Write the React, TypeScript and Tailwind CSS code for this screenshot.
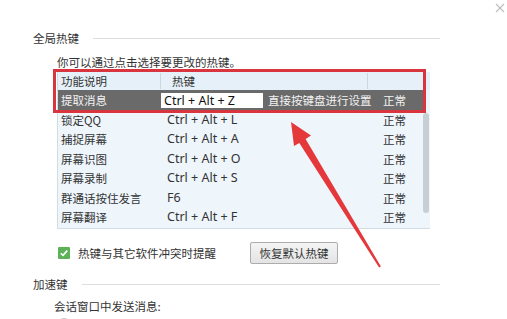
import React from "react";

const rows: [string, string][] = [
  ["锁定QQ", "Ctrl + Alt + L"],
  ["捕捉屏幕", "Ctrl + Alt + A"],
  ["屏幕识图", "Ctrl + Alt + O"],
  ["屏幕录制", "Ctrl + Alt + S"],
  ["群通话按住发言", "F6"],
  ["屏幕翻译", "Ctrl + Alt + F"],
];

const latin = "font-['Noto_Sans','Noto_Sans_CJK_SC',sans-serif]";

export default function App() {
  return (
    <div className="relative w-[507px] h-[319px] overflow-hidden bg-white text-[#333] text-[11.5px] leading-[16px] font-['Noto_Sans_CJK_SC','Noto_Sans',sans-serif]">
      {/* close button */}
      <svg className="absolute right-[2px] top-[3px]" width="10" height="10" viewBox="0 0 10 10">
        <path d="M1 1 L9 9 M9 1 L1 9" stroke="#bdbdbd" strokeWidth="1.1" />
      </svg>

      <div className="pl-[33px] pt-[30px]">
        {/* section header */}
        <div className="flex items-center h-[16px] w-[407px]">
          <span>全局热键</span>
          <div className="ml-[14px] flex-1 h-px bg-[#dedede]" />
        </div>

        <div className="mt-[8px] ml-[24px] h-[16px]">你可以通过点击选择要更改的热键。</div>

        {/* table */}
        <div className="relative mt-[2px] ml-[24px] w-[373px] h-[157px] bg-[#eef6fc] border-b border-l border-[#d3dce3]">
          {/* header */}
          <div className="flex items-center h-[18px] bg-[#e6f0f8]">
            <div className="w-[103px] pl-[3px] border-r border-[#cdd6dd] h-[16px] flex items-center">功能说明</div>
            <div className="w-[207px] pl-[11px] border-r border-[#cdd6dd] h-[16px] flex items-center">热键</div>
            <div className="flex-1" />
          </div>

          <div className="flex">
            <div className="w-[365px]">
              {/* selected row */}
              <div className="flex items-center h-[20px] bg-[#6a6a6a] text-[#f2f2f2]">
                <div className="w-[103px] pl-[3px]">提取消息</div>
                <div className="w-[107px]">
                  <div className={`w-[102px] h-[15px] bg-white text-[#111] text-[12.5px] leading-[15px] pl-[3px] ${latin}`}>
                    Ctrl + Alt + Z
                  </div>
                </div>
                <div className="w-[115px]">直接按键盘进行设置</div>
                <div>正常</div>
              </div>
              {rows.map(([name, key]) => (
                <div key={name} className="flex items-center h-[19.5px]">
                  <div className="w-[103px] pl-[3px]">{name}</div>
                  <div className={`w-[107px] pl-[6px] text-[12.5px] ${latin}`}>{key}</div>
                  <div className="w-[115px]" />
                  <div>正常</div>
                </div>
              ))}
            </div>
            {/* scrollbar */}
            <div className="flex-1 pt-[23px] pl-[0px]">
              <div className="w-[6px] h-[100px] rounded-[3px] bg-[#c6cfd5]" />
            </div>
          </div>

          {/* red annotation frame */}
          <div className="absolute left-[-5px] top-[-3px] w-[373px] h-[44px] border-[3px] border-[#d8353f]" />
        </div>

        {/* checkbox + button */}
        <div className="flex items-center h-[22px] mt-[13px] ml-[25px]">
          <div className="w-[12px] h-[12px] bg-[#5fb157] rounded-[1px] flex items-center justify-center">
            <svg width="10" height="10" viewBox="0 0 10 10">
              <path d="M1.8 5.2 L4 7.4 L8.3 2.6" stroke="white" strokeWidth="1.6" fill="none" />
            </svg>
          </div>
          <span className="ml-[8px]">热键与其它软件冲突时提醒</span>
          <button className="ml-[34px] w-[88px] h-[22px] border border-[#acacac] rounded-[2px] bg-gradient-to-b from-[#f4f4f4] to-[#e4e4e4] text-[#333] text-[11.5px]">
            恢复默认热键
          </button>
        </div>

        {/* second section */}
        <div className="flex items-center h-[16px] w-[407px] mt-[12px]">
          <span>加速键</span>
          <div className="ml-[14px] flex-1 h-px bg-[#dedede]" />
        </div>
        <div className="mt-[6px] ml-[21px] h-[16px]">会话窗口中发送消息:</div>
        <div className="mt-[4px] ml-[25px] w-[12px] h-[12px] rounded-full border border-[#c4c4c4]" />
      </div>

      {/* red arrow annotation */}
      <svg className="absolute inset-0 pointer-events-none" width="507" height="319" viewBox="0 0 507 319">
        <polygon
          points="291,122 311,135.5 305.6,139 380.9,266.5 379.1,267.5 299.3,143 294,146"
          fill="#e5383b"
        />
      </svg>
    </div>
  );
}
